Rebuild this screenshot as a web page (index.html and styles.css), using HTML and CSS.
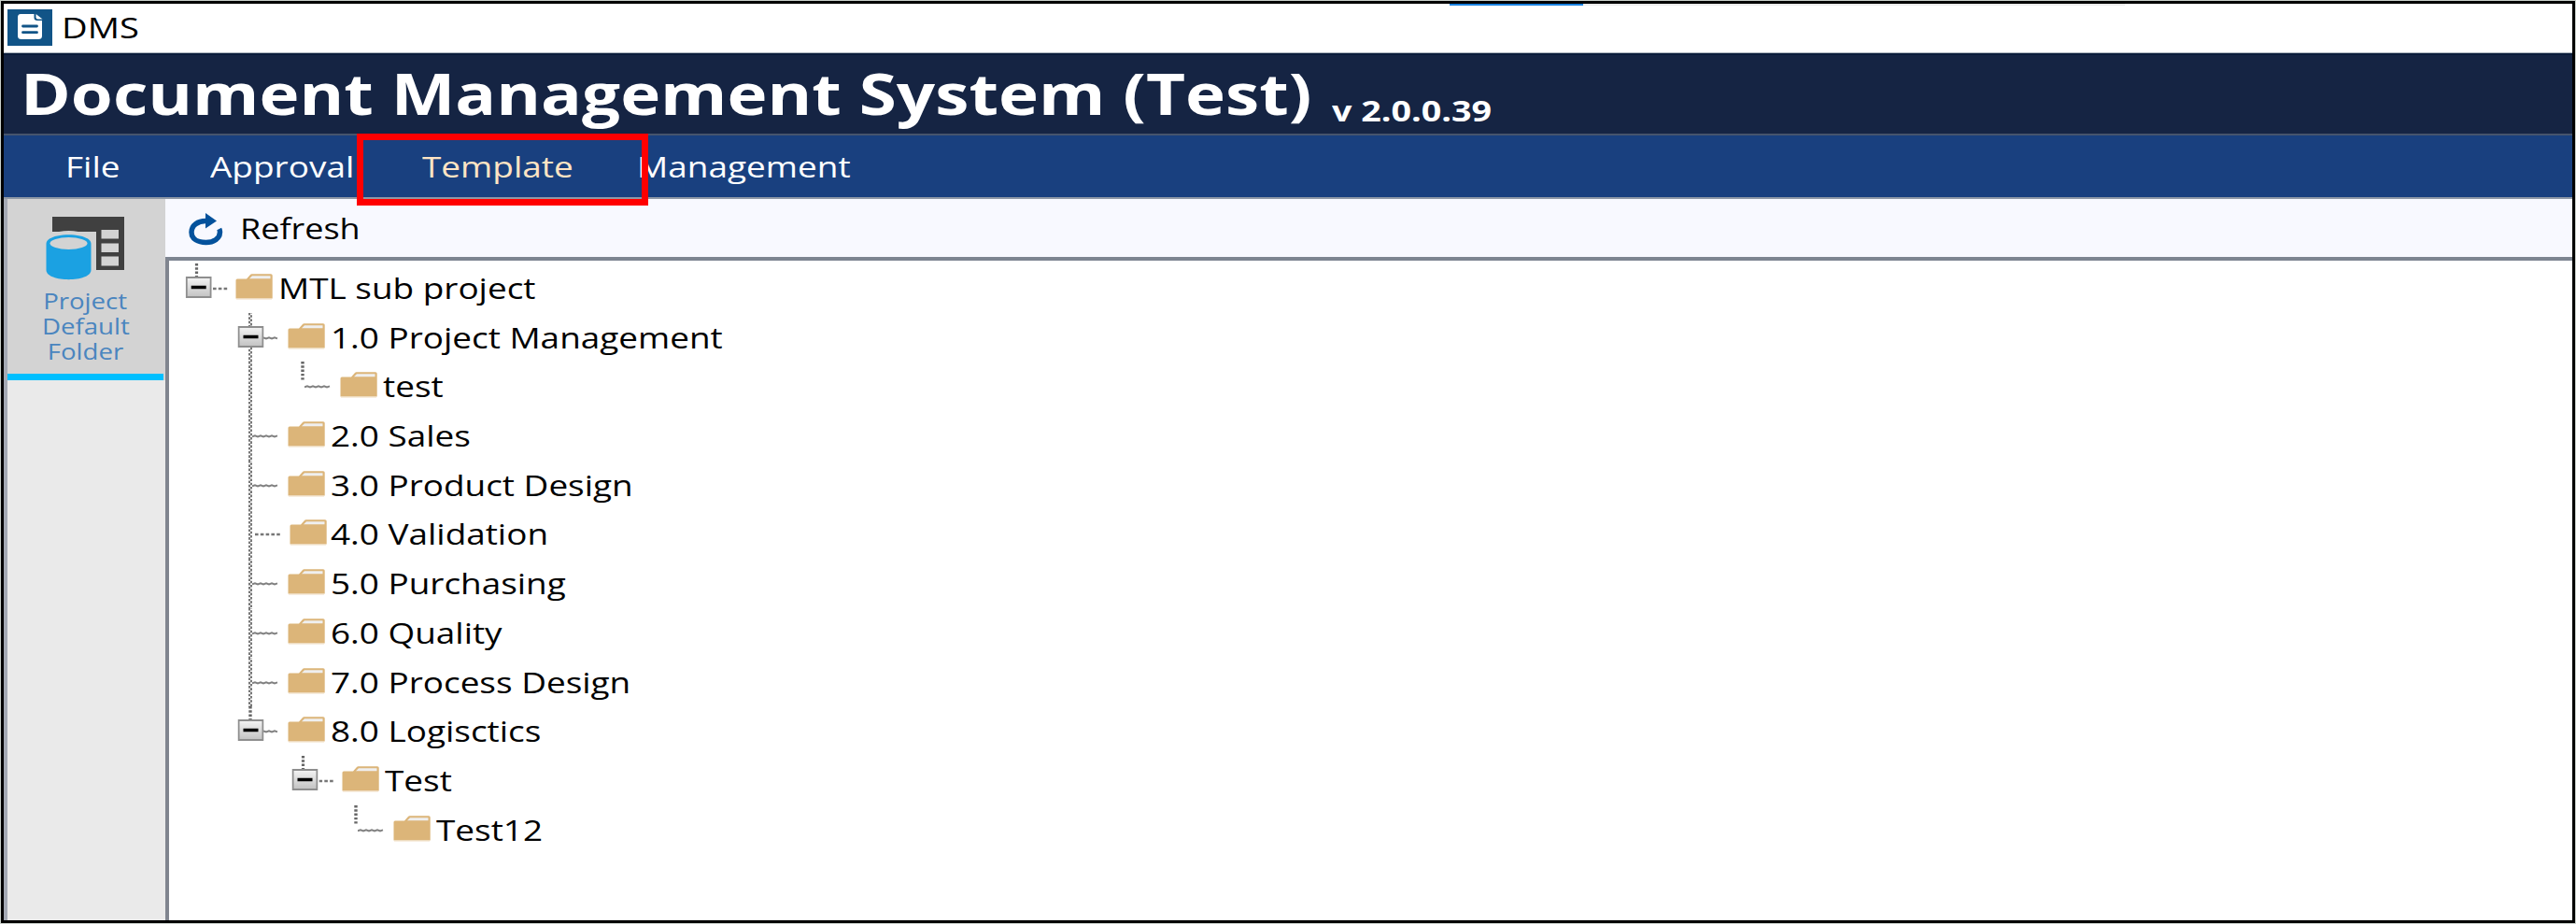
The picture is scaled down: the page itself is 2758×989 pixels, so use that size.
FILE: index.html
```html
<!DOCTYPE html>
<html lang="en">
<head>
<meta charset="utf-8">
<title>DMS</title>
<link rel="stylesheet" href="styles.css">
</head>
<body>
<svg class="defs" width="0" height="0">
  <defs>
    <linearGradient id="btn" x1="0" y1="0" x2="0" y2="1"><stop offset="0" stop-color="#f4f4f4"/><stop offset="1" stop-color="#c2c2c2"/></linearGradient>
    <symbol id="folder" viewBox="0 0 40 28"><path d="M0.500 26.500V7q0-1.500 1.500-1.500H12L16 1q.6-.7 1.500-.7H38q1.700 0 1.700 1.500V26.500Z" fill="#dcb579"/><path d="M15 5.300 18 2.300H37.500V5.300Z" fill="#efefef"/><path d="M1 27H39" stroke="#efdcc0"/></symbol>
    <symbol id="box" viewBox="0 0 28 23"><rect x="1" y="1" width="26" height="21" fill="url(#btn)" stroke="#8e8e8e" stroke-width="2"/><path d="M6 11.500H22" stroke="#000" stroke-width="3.400"/></symbol>
    <symbol id="vdots" viewBox="0 0 4 21"><path d="M2 0V21" stroke="#666" stroke-width="3.400" stroke-dasharray="2.400 1.900"/></symbol>
    <symbol id="vtop" viewBox="0 0 4 14"><path d="M2 0V14" stroke="#666" stroke-width="3.400" stroke-dasharray="2.400 1.900"/></symbol>
    <symbol id="vline" viewBox="0 0 4 53"><path d="M1 0V53" stroke="#777" stroke-width="2" stroke-dasharray="2.600 1.700"/><path d="M3 0V53" stroke="#777" stroke-width="2" stroke-dasharray="2.600 1.700" stroke-dashoffset="2.100"/></symbol>
    <symbol id="hwave" viewBox="0 0 28 4"><path d="M0 2.400l3-1 3 1 3-1 3 1 3-1 3 1 3-1 3 1 3-1" fill="none" stroke="#808080" stroke-width="2"/></symbol>
    <symbol id="hdots" viewBox="0 0 28 4"><path d="M0 2H28" stroke="#777" stroke-width="2.600" stroke-dasharray="3.600 2.200"/></symbol>
    <symbol id="hshort" viewBox="0 0 16 4"><path d="M0 1.400l3 1 3-1 3 1 3-1 3 1" fill="none" stroke="#808080" stroke-width="2"/></symbol>
    <symbol id="hshortdots" viewBox="0 0 16 4"><path d="M0 2H16" stroke="#777" stroke-width="2.600" stroke-dasharray="3.600 2.200"/></symbol>
  </defs>
</svg>
<div class="window">
  <div class="titlebar">
    <svg class="app-icon" viewBox="0 0 48 39"><rect width="48" height="39" fill="#115487"/><path d="M14 5H28.500V9q0 3 3.500 3H37V28.500q0 3.500-4 3.500H15q-4 0-4-3.500V8.500Q11 5 14 5Z" fill="#fff"/><path d="M30.500 5 37.500 10.500H32.500q-2 0-2-2Z" fill="#fff"/><path d="M16.500 18H31.500M16.500 24.700H31.500" stroke="#115487" stroke-width="2.800" stroke-linecap="round"/></svg>
    <span class="app-name">DMS</span>
    <span class="progress"></span>
    <span class="progress-rest"></span>
  </div>
  <header class="header">
    <h1 class="title">Document Management System (Test)</h1>
    <span class="version">v 2.0.0.39</span>
  </header>
  <nav class="menu">
    <span class="menu-item">File</span>
    <span class="menu-item">Approval</span>
    <span class="menu-item active">Template</span>
    <span class="menu-item">Management</span>
    <span class="highlight"></span>
  </nav>
  <div class="body">
    <aside class="sidebar">
      <div class="tab">
        <svg class="tab-icon" viewBox="0 0 86 70"><path d="M7 1H84V58H54V17H7Z" fill="#404040"/><path d="M59.500 15H78V24.500H59.500ZM59.500 29.500H78V39H59.500ZM59.500 43.500H78V53.500H59.500Z" fill="#d3d3d3"/><ellipse cx="24.500" cy="29" rx="27" ry="13" fill="#d3d3d3"/><path d="M.5 30C.5 17 48.500 17 48.500 30V58C48.500 71.500.5 71.500.5 58Z" fill="#1ba1e2"/><ellipse cx="24.500" cy="29.500" rx="20" ry="6.500" fill="#d3d3d3"/></svg>
        <span class="tab-line">Project</span>
        <span class="tab-line">Default</span>
        <span class="tab-line">Folder</span>
      </div>
    </aside>
    <main class="content">
      <div class="toolbar">
        <svg class="refresh-icon" viewBox="0 0 37 35"><path d="M18 8.500C10 8.500 3 13 3 20.500S10 31.500 18.500 31.500 33.500 27 33.500 20.500q0-2-.8-3.500" fill="none" stroke="#04529c" stroke-width="5.500"/><path d="M18 0 30 8.500 18 16.500Z" fill="#04529c"/></svg>
        <span class="refresh">Refresh</span>
      </div>
      <div class="tree">
        <div class="row l0"><svg class="lines"><use href="#vtop" x="10.500" y="0" width="4" height="14"/><use href="#hshortdots" x="30" y="25" width="16" height="4"/><use href="#box" x=".7" y="14" width="28" height="23"/></svg><svg class="folder"><use href="#folder"/></svg><span class="label">MTL sub project</span></div>
        <div class="row l1"><svg class="lines"><use href="#vline" x="12" y="0" width="4" height="53"/><use href="#hshort" x="28" y="25" width="16" height="4"/><use href="#box" x=".5" y="14" width="28" height="23"/></svg><svg class="folder"><use href="#folder"/></svg><span class="label">1.0 Project Management</span></div>
        <div class="row l2"><svg class="lines"><use href="#vdots" x="12" y="0" width="4" height="21"/><use href="#hwave" x="16" y="25" width="28" height="4"/></svg><svg class="folder"><use href="#folder"/></svg><span class="label">test</span><svg class="trunk"><use href="#vline" width="4" height="53"/></svg></div>
        <div class="row l1"><svg class="lines"><use href="#vline" x="12" y="0" width="4" height="53"/><use href="#hwave" x="16" y="25" width="28" height="4"/></svg><svg class="folder"><use href="#folder"/></svg><span class="label">2.0 Sales</span></div>
        <div class="row l1"><svg class="lines"><use href="#vline" x="12" y="0" width="4" height="53"/><use href="#hwave" x="16" y="25" width="28" height="4"/></svg><svg class="folder"><use href="#folder"/></svg><span class="label">3.0 Product Design</span></div>
        <div class="row l1 shifted"><svg class="lines"><use href="#vline" x="12" y="0" width="4" height="53"/><use href="#hdots" x="19" y="25" width="28" height="4"/></svg><svg class="folder"><use href="#folder"/></svg><span class="label">4.0 Validation</span></div>
        <div class="row l1"><svg class="lines"><use href="#vline" x="12" y="0" width="4" height="53"/><use href="#hwave" x="16" y="25" width="28" height="4"/></svg><svg class="folder"><use href="#folder"/></svg><span class="label">5.0 Purchasing</span></div>
        <div class="row l1"><svg class="lines"><use href="#vline" x="12" y="0" width="4" height="53"/><use href="#hwave" x="16" y="25" width="28" height="4"/></svg><svg class="folder"><use href="#folder"/></svg><span class="label">6.0 Quality</span></div>
        <div class="row l1"><svg class="lines"><use href="#vline" x="12" y="0" width="4" height="53"/><use href="#hwave" x="16" y="25" width="28" height="4"/></svg><svg class="folder"><use href="#folder"/></svg><span class="label">7.0 Process Design</span></div>
        <div class="row l1"><svg class="lines"><use href="#vtop" x="12" y="0" width="4" height="14"/><use href="#hshort" x="28" y="25" width="16" height="4"/><use href="#box" x=".5" y="14" width="28" height="23"/></svg><svg class="folder"><use href="#folder"/></svg><span class="label">8.0 Logisctics</span></div>
        <div class="row l2 branch"><svg class="lines"><use href="#vtop" x="10.500" y="0" width="4" height="14"/><use href="#hshortdots" x="29.500" y="25" width="16" height="4"/><use href="#box" x=".5" y="14" width="28" height="23"/></svg><svg class="folder"><use href="#folder"/></svg><span class="label">Test</span></div>
        <div class="row l3"><svg class="lines"><use href="#vdots" x="12" y="0" width="4" height="21"/><use href="#hwave" x="16" y="25" width="28" height="4"/></svg><svg class="folder"><use href="#folder"/></svg><span class="label">Test12</span></div>
      </div>
    </main>
  </div>
</div>
</body>
</html>
```
FILE: styles.css
```css
* { box-sizing: border-box; }
body { margin: 0; padding: 1px; height: 989px; background: #c9cfca; font-family: "Open Sans", "Noto Sans", sans-serif; font-size: 30.5px; color: #000; overflow: hidden; }
.defs { position: absolute; }
.window { width: 2756px; height: 987px; border: 3px solid #000; background: #fff; display: flex; flex-direction: column; overflow: hidden; }

.titlebar { position: relative; height: 53px; flex: none; display: flex; align-items: flex-start; padding: 6px 0 0 4px; border-bottom: 1px solid #a9b2bc; background: #fff; }
.app-icon { width: 48px; height: 39px; }
.app-name { margin-left: 9.500px; line-height: 39px; transform: scaleX(1.25); transform-origin: left; white-space: nowrap; }
.progress { position: absolute; left: 1548px; top: 0; width: 143px; height: 2px; background: #1a82e0; }
.progress-rest { position: absolute; left: 1691px; top: 0; width: 580px; height: 2px; background: #ececec; }

.header { height: 86px; flex: none; display: flex; align-items: flex-start; background: #152443; color: #fff; border-top: 2px solid #0b1c3b; }
.title { margin: 0; padding-left: 18px; width: 1422px; font-size: 61.6px; font-weight: 700; line-height: 80px; white-space: nowrap; transform: scaleX(1.181); transform-origin: 18px 50%; }
.version { padding-top: 16px; line-height: 86px; font-size: 31px; font-weight: 700; white-space: nowrap; transform: scaleX(1.215); transform-origin: left; }

.menu { position: relative; height: 70px; flex: none; display: grid; grid-template-columns: 155px 227px 230px 400px; padding-left: 66px; border-top: 2px solid #46546c; border-bottom: 2px solid #8e98a6; background: #19407f; color: #fff; line-height: 67px; }
.menu-item { transform: scaleX(1.212); transform-origin: left; white-space: nowrap; }
.menu-item.active { color: #ffe4c4; }
.highlight { position: absolute; left: 378px; top: -2px; width: 312px; height: 77px; border: 7px solid #f00; z-index: 2; }

.body { flex: 1; display: flex; min-height: 0; }
.sidebar { width: 173px; flex: none; background: #eaeaea; border-left: 4px solid #a4a9b4; }
.tab { height: 194px; width: 169px; background: linear-gradient(#00bfff, #00bfff) 0 100% / 167px 7px no-repeat, #d3d3d3; display: flex; flex-direction: column; align-items: center; color: #4a85bf; font-size: 24px; line-height: 27px; padding: 18px 2px 0 0; }
.tab-icon { width: 86px; height: 70px; flex: none; margin-bottom: 6.500px; }
.tab-line { transform: scaleX(1.15); white-space: nowrap; }
.content { flex: 1; display: flex; flex-direction: column; min-width: 0; }
.toolbar { height: 62px; flex: none; display: flex; align-items: flex-start; background: #f8f9ff; padding: 15px 0 0 25px; }
.refresh-icon { width: 37px; height: 35px; }
.refresh { margin-left: 17.500px; line-height: 32px; transform: scaleX(1.18); transform-origin: left; white-space: nowrap; }
.tree { flex: 1; border-top: 4px solid #7d8591; border-left: 4px solid #80858f; padding-top: 3px; background: #fff; }
.row { position: relative; display: flex; align-items: flex-start; height: 52.700px; line-height: 52px; }
.l0 { padding-left: 17px; }
.l1 { padding-left: 73px; }
.l2 { padding-left: 129px; }
.branch { padding-left: 130.500px; }
.l3 { padding-left: 186px; }
.lines { width: 54px; height: 52.700px; flex: none; overflow: visible; }
.folder { width: 40px; height: 28px; flex: none; margin-top: 11px; }
.shifted .folder { margin-left: 2px; margin-right: -2px; }
.label { margin-left: 6px; transform: scaleX(1.21); transform-origin: left; white-space: nowrap; }
.trunk { position: absolute; left: 85px; top: 0; width: 4px; height: 53px; }
```
